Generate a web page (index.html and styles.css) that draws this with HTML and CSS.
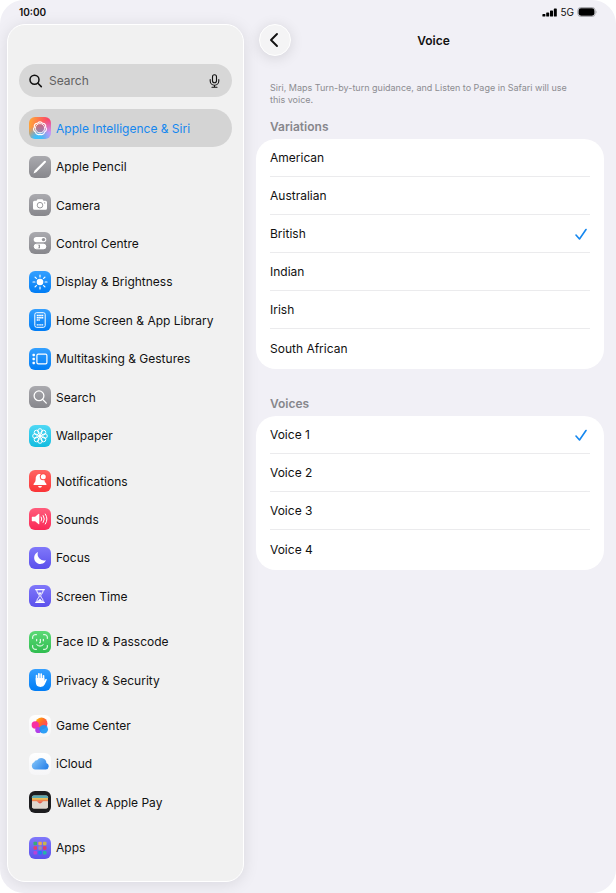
FILE: index.html
```html
<!DOCTYPE html>
<html lang="en">
<head>
    <meta charset="utf-8">
    <meta name="viewport" content="width=device-width, initial-scale=1">
    <title>Voice</title>
    <link rel="stylesheet" href="styles.css">
</head>
<body>
<div class="device">
    <header class="status-bar">
        <span class="time">10:00</span>
        <div class="status-right">
            <svg width="15" height="9" viewBox="0 0 15 9"><rect x=".4" y="6" width="3" height="2.6" rx=".7"/><rect x="4.200" y="4.400" width="3" height="4.200" rx=".7"/><rect x="8" y="2.400" width="3" height="6.200" rx=".7"/><rect x="11.800" y=".4" width="3" height="8.200" rx=".7"/></svg>
            <span class="network">5G</span>
            <svg width="21" height="10" viewBox="0 0 21 10"><rect x=".8" y=".5" width="17.4" height="9" rx="3" fill="none" stroke="#a9a9ae"/><rect x="1.600" y="1.300" width="15.800" height="7.400" rx="2.400"/><path d="M19.2 3.4q1.3 1.6 0 3.2z" fill="#a9a9ae"/></svg>
        </div>
    </header>

    <div class="layout">
        <aside class="sidebar">
            <div class="search">
                <svg width="14" height="14" viewBox="0 0 14 14" fill="none" stroke="#111" stroke-width="1.5" stroke-linecap="round"><circle cx="5.5" cy="5.8" r="4.5"/><path d="M8.900 9.200l3.400 3.400"/></svg>
                <input type="search" placeholder="Search" aria-label="Search settings">
                <button class="mic" type="button" aria-label="Dictate">
                    <svg width="11" height="14" viewBox="0 0 11 14" fill="none" stroke="#111" stroke-width="1.1" stroke-linecap="round"><rect x="3.5" y=".8" width="4" height="8" rx="2"/><path d="M1.2 5.5v1.4a4.3 4.3 0 0 0 8.6 0V5.5M5.5 11.2v2M3 13.2h5"/></svg>
                </button>
            </div>

            <nav class="menu">
                <a class="item active" href="#siri">
                    <svg class="icon siri" viewBox="0 0 22 22" fill="none" stroke="#fff"><circle cx="11" cy="11" r="5" fill="#a06a92" fill-opacity=".55" stroke="none"/><path d="M8.500 6.200a3 3 0 0 1 5 0 3 3 0 0 1 3.100 3.900 3 3 0 0 1-1.100 4.900 3 3 0 0 1-4.500 2.200 3 3 0 0 1-4.500-2.200 3 3 0 0 1-1.100-4.900 3 3 0 0 1 3.100-3.900z" stroke-width="1.100" stroke-linejoin="round"/><circle cx="11" cy="11.200" r="4.600" stroke-width=".9"/></svg>
                    Apple Intelligence &amp; Siri
                </a>
                <a class="item" href="#pencil">
                    <svg class="icon gray" viewBox="0 0 22 22"><path d="M4.500 17.500l1.100-2.900 9.600-9.500q.8-.7 1.500 0t0 1.500l-9.500 9.600z" fill="#fff"/></svg>
                    Apple Pencil
                </a>
                <a class="item" href="#camera">
                    <svg class="icon gray" viewBox="0 0 22 22"><path d="M5.500 6.800h2l1-1.600h5l1 1.600h2q1.500 0 1.500 1.500v6q0 1.500-1.500 1.500h-11Q4 15.800 4 14.300v-6q0-1.500 1.500-1.500z" fill="#fff"/><circle cx="11" cy="11.200" r="2.800" fill="none" stroke="#8e8e93" stroke-width=".9"/><circle cx="15.700" cy="8.900" r=".6" fill="#8e8e93"/></svg>
                    Camera
                </a>
                <a class="item" href="#control">
                    <svg class="icon gray" viewBox="0 0 22 22"><rect x="4.700" y="5" width="12.600" height="5.200" rx="2.600" fill="#fff"/><circle cx="14.500" cy="7.600" r="1.700" fill="#929297"/><rect x="5.200" y="12.200" width="11.600" height="4.600" rx="2.300" fill="none" stroke="#fff"/><path d="M11 12h3.500a2.500 2.500 0 0 1 0 5H11z" fill="#fff"/><circle cx="7.500" cy="14.500" r="2.300" fill="#fff"/></svg>
                    Control Centre
                </a>
                <a class="item" href="#display">
                    <svg class="icon blue" viewBox="0 0 22 22"><circle cx="11" cy="11" r="3.300" fill="#fff"/><path d="M11 4v1.900M11 16.100V18M4 11h1.900M16.100 11H18M6.050 6.050l1.350 1.350M14.600 14.600l1.350 1.350M6.050 15.950L7.400 14.600M14.600 7.400l1.350-1.350" stroke="#fff" stroke-width="1.200" stroke-linecap="round"/></svg>
                    Display &amp; Brightness
                </a>
                <a class="item" href="#home">
                    <svg class="icon blue" viewBox="0 0 22 22" fill="none" stroke="#fff"><rect x="5.800" y="3.700" width="10.400" height="14.600" rx="1.800"/><path d="M7.700 6.500h6.600M7.700 8.800h6.600" stroke-width="1.500" stroke-dasharray="1.500 .2"/><path d="M7.700 11h3.200M7.700 15.900h6.600" stroke-width="1.300" stroke-dasharray="1.400 .3"/></svg>
                    Home Screen &amp; App Library
                </a>
                <a class="item" href="#multitasking">
                    <svg class="icon blue" viewBox="0 0 22 22"><rect x="7.900" y="6.200" width="10" height="9.600" rx="1.300" fill="none" stroke="#fff" stroke-width="1.200"/><rect x="3.500" y="5.800" width="2.400" height="2.400" rx=".6" fill="#fff"/><rect x="3.500" y="9.800" width="2.400" height="2.400" rx=".6" fill="#fff"/><rect x="3.500" y="13.800" width="2.400" height="2.400" rx=".6" fill="#fff"/></svg>
                    Multitasking &amp; Gestures
                </a>
                <a class="item" href="#search">
                    <svg class="icon gray" viewBox="0 0 22 22" fill="none" stroke="#fff" stroke-width="1.300" stroke-linecap="round"><circle cx="10" cy="9.800" r="4.900"/><path d="M13.600 13.400l3.700 3.700"/></svg>
                    Search
                </a>
                <a class="item" href="#wallpaper">
                    <svg class="icon cyan" viewBox="0 0 22 22" fill="none" stroke="#fff"><circle cx="11" cy="6" r="2.300"/><circle cx="14.500" cy="7.500" r="2.300"/><circle cx="16" cy="11" r="2.300"/><circle cx="14.500" cy="14.500" r="2.300"/><circle cx="11" cy="16" r="2.300"/><circle cx="7.500" cy="14.500" r="2.300"/><circle cx="6" cy="11" r="2.300"/><circle cx="7.500" cy="7.500" r="2.300"/><circle cx="11" cy="11" r="1.500" fill="#fff"/></svg>
                    Wallpaper
                </a>

                <a class="item group-start" href="#notifications">
                    <svg class="icon red" viewBox="0 0 22 22"><path d="M10.800 4C7.900 4 6.800 6.300 6.700 8.700c-.1 2.600-.7 3.600-1.800 4.700-.7.800-.4 1.700.5 1.700h11.200c.9 0 1.200-.9.500-1.700-1.100-1.100-1.700-2.100-1.800-4.700C15.100 6.300 13.700 4 10.800 4zM9 16h4q-.4 1.800-2 1.800T9 16z" fill="#fff"/><circle cx="14.300" cy="6.700" r="3.500" fill="#ff4d4b"/><circle cx="14.300" cy="6.700" r="2.500" fill="#fff"/></svg>
                    Notifications
                </a>
                <a class="item" href="#sounds">
                    <svg class="icon pink" viewBox="0 0 22 22"><path d="M3.300 8.800h2.800l3.300-2.900q.9-.6.900.4v9.400q0 1-.9.400l-3.300-2.900H3.300q-.5 0-.5-.5V9.300q0-.5.500-.5z" fill="#fff"/><path d="M12.200 9q1.300 2 0 4M14.200 7.500q2.400 3.500 0 7M16.300 6q3.400 5 0 10" fill="none" stroke="#fff" stroke-linecap="round"/></svg>
                    Sounds
                </a>
                <a class="item" href="#focus">
                    <svg class="icon indigo" viewBox="0 0 22 22"><path d="M9 5a6.200 6.200 0 1 0 8 8.300A6.500 6.500 0 0 1 9 5z" fill="#fff"/></svg>
                    Focus
                </a>
                <a class="item" href="#screen-time">
                    <svg class="icon indigo" viewBox="0 0 22 22" fill="none" stroke="#fff" stroke-width="1.300" stroke-linecap="round"><path d="M6.700 4.700h8.600M6.700 17.300h8.600"/><path d="M7.800 5c0 3.800 2.500 4.200 2.500 6s-2.500 2.200-2.500 6h6.400c0-3.800-2.500-4.200-2.500-6s2.500-2.200 2.500-6" stroke-width="1"/><path d="M9.500 7.800h3L11 9.700zM8.900 16.300l2.100-2.500 2.100 2.500z" fill="#fff" stroke-width=".5"/></svg>
                    Screen Time
                </a>

                <a class="item group-start" href="#face-id">
                    <svg class="icon green" viewBox="0 0 22 22" fill="none" stroke="#fff" stroke-linecap="round"><path d="M3.700 7.500V6q0-2.300 2.300-2.300h1.500M14.500 3.700H16q2.300 0 2.300 2.300v1.500M18.300 14.500V16q0 2.300-2.300 2.300h-1.500M7.500 18.300H6q-2.300 0-2.300-2.300v-1.500M7.700 8.300v1.600M14.300 8.300v1.600M11.300 8.300v3.500h-.9M7.800 13.700q3.200 3 6.400 0"/></svg>
                    Face ID &amp; Passcode
                </a>
                <a class="item" href="#privacy">
                    <svg class="icon blue" viewBox="0 0 22 22"><path d="M7.600 11V6.500M9.900 10V4.800M12.200 10V5M14.500 11V6.800" stroke="#fff" stroke-width="1.700" stroke-linecap="round"/><path d="M6.750 9h8.600v3l1-1.700q.5-.7 1.200-.3.500.4.200 1.100l-1.900 4.200q-1.100 2.600-4.300 2.600-4.800 0-4.800-5.200z" fill="#fff"/></svg>
                    Privacy &amp; Security
                </a>

                <a class="item group-start" href="#game-center">
                    <svg class="icon white" viewBox="0 0 22 22">
                        <defs><linearGradient id="game" x1="0" y1="0" x2="1" y2="1"><stop offset="0" stop-color="#ffc400"/><stop offset=".45" stop-color="#ff6a2b"/><stop offset="1" stop-color="#ff2d83"/></linearGradient></defs>
                        <circle cx="12.500" cy="8.500" r="6" fill="url(#game)"/><circle cx="6.300" cy="10" r="3.700" fill="#f82fa2"/><circle cx="9.300" cy="15" r="3.100" fill="#b33ee8"/><circle cx="14.700" cy="14.300" r="4.300" fill="#1b97f5" opacity=".92"/>
                    </svg>
                    Game Center
                </a>
                <a class="item" href="#icloud">
                    <svg class="icon white" viewBox="0 0 22 22">
                        <defs><linearGradient id="cloud" x1="0" y1="0" x2="1" y2=".6"><stop offset="0" stop-color="#8ccbfa"/><stop offset="1" stop-color="#2f86ea"/></linearGradient></defs>
                        <path d="M6.200 16.500a3.800 3.800 0 0 1-1-7.300 2.700 2.700 0 0 1 2.900-2 5.100 5.100 0 0 1 9.300 2.700 3.400 3.400 0 0 1-.6 6.600z" fill="url(#cloud)"/>
                    </svg>
                    iCloud
                </a>
                <a class="item" href="#wallet">
                    <svg class="icon black" viewBox="0 0 22 22"><rect x="3" y="4.500" width="16" height="13" rx="1.800" fill="#d9d2c8"/><path d="M3 8.200V6.300q0-1.800 1.800-1.800h12.400q1.800 0 1.800 1.800v1.900z" fill="#5ba9b0"/><path d="M3 7h16v2H3z" fill="#e9bd57"/><path d="M3 8.700h16v2H3z" fill="#ef7f4d"/><path d="M3 10.300h4.800q.8 0 1.200.8.700 1.300 2 1.300t2-1.300q.4-.8 1.200-.8H19v5.400q0 1.800-1.800 1.800H4.800Q3 17.500 3 15.700z" fill="#ded6cd"/><path d="M7.500 10.400q1 0 1.500.9.700 1.100 2 1.100t2-1.100q.5-.9 1.500-.9z" fill="#e95a4c"/></svg>
                    Wallet &amp; Apple Pay
                </a>

                <a class="item group-start" href="#apps">
                    <svg class="icon indigo" viewBox="0 0 22 22"><rect x="4.500" y="4.700" width="3.500" height="3.500" rx=".7" fill="#36ad78"/><rect x="9.300" y="4.700" width="3.500" height="3.500" rx=".7" fill="#f0a64b"/><rect x="14" y="4.700" width="3.500" height="3.500" rx=".7" fill="#c7b64b"/><rect x="4.500" y="9.300" width="3.500" height="3.500" rx=".7" fill="#e63f6b"/><rect x="9.300" y="9.300" width="3.500" height="3.500" rx=".7" fill="#9c8fa8"/><rect x="14" y="9.300" width="3.500" height="3.500" rx=".7" fill="#e33e62"/><rect x="4.500" y="14" width="3.500" height="3.500" rx=".7" fill="#b443d8"/><rect x="9.300" y="14" width="3.500" height="3.500" rx=".7" fill="#1683f3"/><rect x="14" y="14" width="3.500" height="3.500" rx=".7" fill="#24b4a8"/></svg>
                    Apps
                </a>
            </nav>
        </aside>

        <main class="content">
            <div class="title-bar">
                <button class="back" type="button" aria-label="Back">
                    <svg width="12" height="16" viewBox="0 0 12 16" fill="none" stroke="#111" stroke-width="1.9" stroke-linecap="round" stroke-linejoin="round"><path d="M8 2L2 8l6 6"/></svg>
                </button>
                <h1>Voice</h1>
            </div>

            <p class="note">Siri, Maps Turn-by-turn guidance, and Listen to Page in Safari will use this voice.</p>

            <section>
                <h2>Variations</h2>
                <div class="card">
                    <label class="option">American<input type="radio" name="variation"></label>
                    <label class="option">Australian<input type="radio" name="variation"></label>
                    <label class="option">British<input type="radio" name="variation" checked><svg class="check" viewBox="0 0 12 12"><path d="M1 7l3.500 4L11 1.500"/></svg></label>
                    <label class="option">Indian<input type="radio" name="variation"></label>
                    <label class="option">Irish<input type="radio" name="variation"></label>
                    <label class="option">South African<input type="radio" name="variation"></label>
                </div>
            </section>

            <section>
                <h2>Voices</h2>
                <div class="card">
                    <label class="option">Voice 1<input type="radio" name="voice" checked><svg class="check" viewBox="0 0 12 12"><path d="M1 7l3.500 4L11 1.500"/></svg></label>
                    <label class="option">Voice 2<input type="radio" name="voice"></label>
                    <label class="option">Voice 3<input type="radio" name="voice"></label>
                    <label class="option">Voice 4<input type="radio" name="voice"></label>
                </div>
            </section>
        </main>
    </div>
</div>
</body>
</html>
```

FILE: styles.css
```css
* { box-sizing: border-box; }
body {
    margin: 0;
    background: #fff;
    color: #111;
    font-family: Inter, "Liberation Sans", sans-serif;
    font-size: 12px;
}
button {
    padding: 0;
    border: none;
    background: none;
    cursor: pointer;
}
svg { display: block; flex: none; }

.device {
    display: flex;
    flex-direction: column;
    min-height: 100vh;
    padding: 0 12px 11px 7px;
    border-radius: 24px;
    background: #f1f0f6;
    overflow: hidden;
}

/* Status bar */
.status-bar {
    display: flex;
    justify-content: space-between;
    align-items: center;
    height: 24px;
    padding: 0 6px 0 12px;
    font-size: 10px;
}
.time { font-weight: 600; }
.status-right { display: flex; align-items: center; gap: 3px; }

.layout {
    display: grid;
    grid-template-columns: 237px 1fr;
    gap: 12px;
    flex: 1;
}

/* Sidebar */
.sidebar {
    display: flex;
    flex-direction: column;
    padding: 39px 11px 14px;
    border: 1px solid #fff;
    border-radius: 18px;
    background: #f1f1f1;
    box-shadow: 0 2px 16px rgba(0, 0, 20, 0.1);
}
.search {
    display: flex;
    align-items: center;
    gap: 6px;
    height: 33px;
    margin-bottom: 12px;
    padding: 0 12px 0 10px;
    border-radius: 17px;
    background: #d7d7d7;
}
.search input {
    flex: 1;
    min-width: 0;
    padding: 0;
    border: none;
    outline: none;
    background: none;
    font: inherit;
}
.search input::placeholder { color: #616161; }
.menu { display: flex; flex-direction: column; flex: 1; }
.item {
    display: flex;
    align-items: center;
    flex: 1;
    gap: 5px;
    min-height: 32px;
    padding: 0 10px;
    border-radius: 19px;
    color: #111;
    text-decoration: none;
    white-space: nowrap;
}
.item.active { background: #d4d4d4; color: #1587ef; }
.group-start { margin-top: 7px; }

.icon { width: 22px; height: 22px; border-radius: 6px; }
.gray { background: linear-gradient(#aaaaaf, #87878c); }
.blue { background: linear-gradient(#35a0ff, #007df5); }
.cyan { background: linear-gradient(#4fd8f5, #12bcdf); }
.red { background: linear-gradient(#ff6461, #fa3437); }
.pink { background: linear-gradient(#ff5d7c, #fa2856); }
.indigo { background: linear-gradient(#8078fa, #5b50ec); }
.green { background: linear-gradient(#5bd975, #30bd50); }
.white { background: linear-gradient(#fff, #f5f5f7); }
.black { background: #1d1d1f; }
.siri {
    background:
        radial-gradient(circle at 40% 105%, #3fc0fb 15%, transparent 55%),
        radial-gradient(circle at 100% 90%, #c795f5 15%, transparent 60%),
        linear-gradient(100deg, #ffa03a 10%, #fb3f6c 80%);
}

/* Content */
.title-bar {
    display: grid;
    grid-template-columns: 32px 1fr 28px;
    align-items: center;
    padding-left: 3px;
}
.back {
    display: grid;
    place-items: center;
    width: 32px;
    height: 32px;
    border: 1px solid #fff;
    border-radius: 50%;
    background: #f4f4f5;
    box-shadow: 0 2px 14px rgba(0, 0, 20, 0.12);
}
h1 {
    margin: 0;
    font-size: 12px;
    font-weight: 600;
    text-align: center;
}
.note {
    margin: 26px 20px 13px 14px;
    color: #8c8c91;
    font-size: 9px;
    line-height: 12px;
}
h2 {
    margin: 0 14px 4px;
    color: #87878c;
    font-size: 12px;
    font-weight: 600;
    line-height: 16px;
}
.card {
    margin-bottom: 27px;
    padding: 0 14px 2px;
    border-radius: 20px;
    background: #fff;
}
.option {
    display: flex;
    align-items: center;
    justify-content: space-between;
    height: 38px;
    border-bottom: 1px solid #ebebed;
    cursor: pointer;
}
.option:last-child { border-bottom: none; }
.option input {
    appearance: none;
    width: 0;
    height: 0;
    margin: 0;
}
.check {
    width: 12px;
    height: 12px;
    margin-right: 3px;
    fill: none;
    stroke: #1587ef;
    stroke-width: 1.6;
    stroke-linecap: round;
    stroke-linejoin: round;
}
```
